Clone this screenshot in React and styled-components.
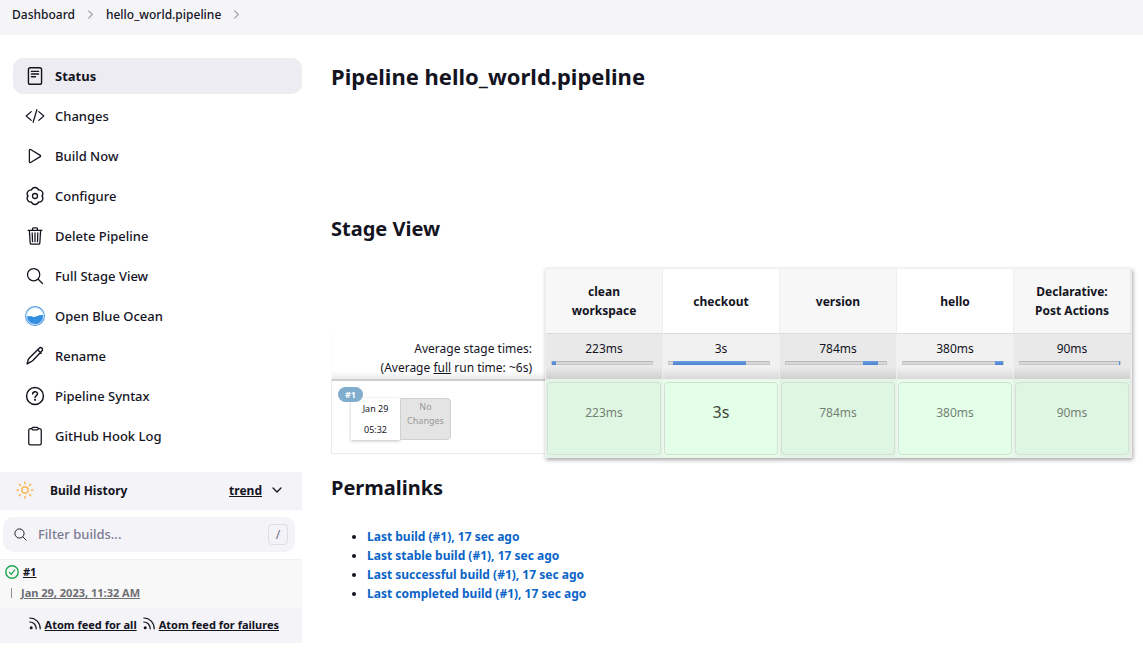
import React from "react";
import styled, { createGlobalStyle, css } from "styled-components";
import {
  IoCodeSlashOutline,
  IoPlayOutline,
  IoTrashOutline,
  IoSearchOutline,
  IoClipboardOutline,
  IoChevronDown,
  IoChevronForward,
  IoSunnyOutline,
} from "react-icons/io5";

const GlobalStyle = createGlobalStyle`
  *, *::before, *::after { box-sizing: border-box; }
  body {
    margin: 0;
    background: #fff;
    color: #14141f;
    font: 400 12px/19px "Noto Sans", "Open Sans", sans-serif;
  }
  a { color: inherit; }
  svg { flex: none; display: block; }
`;

/* Breadcrumbs */

const Breadcrumbs = styled.nav`
  display: flex;
  align-items: center;
  gap: 9px;
  height: 35px;
  padding: 0 12px 6px;
  background: #f5f5f8;
  font-weight: 500;
  svg { color: #a3a3b5; }
`;

const Crumb = styled.a`
  text-decoration: none;
`;

/* Page frame */

const Page = styled.div`
  display: flex;
  align-items: flex-start;
`;

const Sidebar = styled.aside`
  flex: none;
  width: 302px;
  padding-top: 23px;
`;

const Main = styled.main`
  flex: 1;
  min-width: 0;
  padding: 23px 11px 24px 29px;
`;

/* Side menu */

const Menu = styled.nav`
  display: flex;
  flex-direction: column;
  gap: 4px;
  padding: 0 0 18px 13px;
`;

const MenuItem = styled.a`
  display: flex;
  align-items: center;
  gap: 10px;
  height: 36px;
  padding: 0 12px;
  border-radius: 10px;
  font-size: 13px;
  font-weight: ${(p) => (p.$active ? 700 : 500)};
  background: ${(p) => (p.$active ? "#ececf2" : "transparent")};
  text-decoration: none;
`;

/* Build history */

const HistoryHeader = styled.header`
  display: flex;
  align-items: center;
  height: 38px;
  padding: 0 18px 2px 15px;
  background: #f3f3f8;
  font-weight: 700;
`;

const HistoryTitle = styled.span`
  flex: 1;
  padding-left: 15px;
`;

const IconButton = styled.button`
  display: flex;
  margin-left: 8px;
  padding: 0;
  border: 0;
  background: none;
  color: inherit;
`;

const Search = styled.label`
  display: flex;
  align-items: center;
  gap: 10px;
  height: 35px;
  margin: 7px 7px 7px 3px;
  padding: 0 7px 0 10px;
  border-radius: 10px;
  background: #f3f3f8;
`;

const SearchInput = styled.input`
  flex: 1;
  min-width: 0;
  padding: 0;
  border: 0;
  outline: 0;
  background: none;
  font: 500 13px/19px "Noto Sans", "Open Sans", sans-serif;
  &::placeholder { color: #7b7b92; opacity: 1; }
`;

const Shortcut = styled.kbd`
  width: 20px;
  height: 21px;
  border: 1px solid #dedee6;
  border-radius: 4px;
  color: #7b7b92;
  font: 500 12px/19px "Noto Sans", sans-serif;
  text-align: center;
`;

const Build = styled.div`
  height: 49px;
  padding: 1px 5px 0;
  border-top: 1px solid #f0f0f0;
  background: #f8f8f8;
  font-size: 11px;
  font-weight: 700;
`;

const BuildLine = styled.div`
  display: flex;
  align-items: center;
  gap: 4px;
  height: 21px;
`;

const BuildDate = styled.a`
  margin-left: 6px;
  padding-left: 10px;
  color: #6e6e73;
  position: relative;
  &::before {
    content: "";
    position: absolute;
    left: 0;
    top: 5px;
    height: 10px;
    border-left: 1px solid #8f8f94;
  }
`;

const Feeds = styled.footer`
  display: flex;
  justify-content: flex-end;
  gap: 6px;
  height: 35px;
  padding: 0 23px 2px 0;
  background: #f3f3f8;
  font-size: 11px;
  font-weight: 700;
`;

const Feed = styled.a`
  display: flex;
  align-items: center;
  gap: 4px;
  svg { margin-bottom: 2px; }
`;

/* Main column */

const Title = styled.h1`
  margin: 0 0 119px;
  font-size: 22px;
  line-height: 36px;
`;

const Subtitle = styled.h2`
  margin: 0 0 23px;
  font-size: 20px;
  line-height: 32px;
`;

const StageView = styled.section`
  display: flex;
  align-items: flex-start;
  margin-bottom: 14px;
`;

const Runs = styled.div`
  flex: none;
  width: 214px;
  padding-top: 65px;
`;

const Averages = styled.div`
  height: 48px;
  padding: 6px 13px 0 0;
  border-bottom: 2px solid #cdcdcd;
  border-left: 1px solid #fafafa;
  background: linear-gradient(#fff 38px, #ececec);
  text-align: right;
`;

const Run = styled.div`
  height: 73px;
  padding: 6px;
  border: solid #ebebeb;
  border-width: 0 0 1px 1px;
`;

const RunBadge = styled.span`
  position: relative;
  display: block;
  width: 25px;
  height: 15px;
  border-radius: 8px;
  background: #80acce;
  color: #fff;
  font-size: 9px;
  font-weight: 700;
  line-height: 15px;
  text-align: center;
`;

const RunInfo = styled.div`
  display: flex;
  width: 100px;
  height: 42px;
  margin: -4px 0 0 13px;
  font-size: 9px;
  text-align: center;
`;

const RunTime = styled.div`
  flex: 1;
  background: #fff;
  box-shadow: 0 1px 3px rgba(0, 0, 0, 0.25);
  line-height: 21px;
`;

const NoChanges = styled.div`
  flex: 1;
  padding-top: 1px;
  border: 1px solid #d0d0d0;
  border-radius: 0 4px 4px 0;
  background: #e4e4e4;
  color: #999;
  line-height: 14px;
`;

const StagePanel = styled.div`
  flex: 1;
  min-width: 0;
  border: 1px solid #efefef;
  box-shadow: 1px 2px 4px rgba(0, 0, 0, 0.35);
`;

const Stages = styled.table`
  width: 100%;
  table-layout: fixed;
  border-spacing: 0;
  text-align: center;
`;

const cell = css`
  padding: 0;
  border-right: 1px solid #efefef;
  &:last-child { border-right-color: #e6e6e6; }
`;

const StageName = styled.th`
  ${cell}
  height: 65px;
  padding: 0 16px;
  border-bottom: 1px solid #dcdcdc;
  background: #fff;
  &:nth-child(odd) { background: #f7f7f7; }
`;

const StageAverage = styled.td`
  ${cell}
  height: 45px;
  padding: 5px 9px 0 5px;
  vertical-align: top;
  background: linear-gradient(#f1f1f1 33px, #d9d9d9);
  &:nth-child(odd) { background: linear-gradient(#e9e9e9 33px, #cfcfcf); }
`;

const AverageText = styled.div`
  padding-left: 4px;
`;

const Bar = styled.div`
  display: flex;
  height: 4px;
  margin-top: 3px;
  border: 1px solid #c8c8c8;
  border-top-color: #b8b8b8;
  background: #d8d8d8;
`;

const BarFill = styled.div`
  flex: none;
  height: 4px;
  margin-top: -1px;
  background: linear-gradient(#6d9fdc, #4b80d2);
`;

const StageRun = styled.td`
  ${cell}
  height: 77px;
  padding: 2px 1px;
  border-top: 1px solid #efefef;
  background: #e4ffe7;
  &:nth-child(odd) { background: #dff7e2; }
`;

const StageBox = styled.div`
  height: 73px;
  border: 1px solid #d6ddd7;
  border-radius: 4px;
  color: ${(p) => (p.$slow ? "#3c463e" : "#758077")};
  font-size: ${(p) => (p.$slow ? 16 : 12)}px;
  line-height: 59px;
`;

const Permalinks = styled.ul`
  margin: 0;
  padding-left: 36px;
  font-weight: 700;
`;

const Permalink = styled.a`
  color: #0b64c8;
  text-decoration: none;
`;

/* Icons */

const Line = ({ size = 20, children, width = 32 }) => (
  <svg
    width={size}
    height={size}
    viewBox="0 0 512 512"
    fill="none"
    stroke="currentColor"
    strokeWidth={width}
    strokeLinecap="round"
    strokeLinejoin="round"
    aria-hidden="true"
  >
    {children}
  </svg>
);

const StatusIcon = () => (
  <Line width={36}>
    <rect x="88" y="44" width="336" height="424" rx="48" />
    <path d="M166 138h180M166 206h180M166 274h100" />
  </Line>
);

const GearIcon = () => (
  <Line width={34}>
    <circle cx="256" cy="256" r="64" />
    <path d="M434 256C486 306 446 424 345 410C317 494 195 494 167 410C66 424 26 306 78 256C26 206 66 88 167 102C195 18 317 18 345 102C446 88 486 206 434 256z" />
  </Line>
);

const PencilIcon = () => (
  <Line width={36}>
    <path d="M54 458l26-98c8-26 18-42 38-62L358 66c26-26 60-28 78-10s16 52-10 78L206 364c-20 20-36 32-60 42zM326 98l88 88" />
  </Line>
);

const HelpIcon = () => (
  <Line width={38}>
    <circle cx="256" cy="256" r="216" />
    <path d="M196 202c6-72 124-72 124-4 0 48-62 46-62 98" />
    <circle cx="258" cy="354" r="10" fill="currentColor" />
  </Line>
);

const OceanIcon = () => (
  <svg width="20" height="20" viewBox="0 0 20 20" aria-hidden="true">
    <circle cx="10" cy="10" r="9.4" fill="#fff" stroke="#4a97e0" strokeWidth="1.1" />
    <circle cx="10" cy="10" r="8.4" fill="none" stroke="#b5d7f5" strokeWidth=".9" />
    <path d="M2 10.6c2.6-1.2 4.4-.2 6.4.3 2.7.7 4.6-2.4 9.6-1.7.3 5.6-3.6 8.8-8 8.8s-7.7-3-8-7.4z" fill="#348fe2" />
  </svg>
);

const CheckIcon = () => (
  <svg width="14" height="14" viewBox="0 0 14 14" fill="none" stroke="#1ea64b" aria-hidden="true">
    <circle cx="7" cy="7" r="6.2" strokeWidth="1.4" />
    <path d="M4.4 7.4l1.8 1.9 3.6-4.4" strokeWidth="1.2" strokeLinecap="round" />
  </svg>
);

const FeedIcon = () => (
  <svg width="12" height="13" viewBox="0 0 12 13" fill="none" stroke="currentColor" strokeLinecap="round" aria-hidden="true">
    <path d="M.8 1c6 0 10.4 4.8 10.4 10.8M.8 5c3.8 0 6.4 3 6.4 6.8" strokeWidth="1.2" />
    <circle cx="2.2" cy="10.8" r="1.5" fill="currentColor" stroke="none" />
  </svg>
);

const menu = [
  ["Status", <StatusIcon />],
  ["Changes", <IoCodeSlashOutline size={20} />],
  ["Build Now", <IoPlayOutline size={20} />],
  ["Configure", <GearIcon />],
  ["Delete Pipeline", <IoTrashOutline size={20} />],
  ["Full Stage View", <IoSearchOutline size={20} />],
  ["Open Blue Ocean", <OceanIcon />],
  ["Rename", <PencilIcon />],
  ["Pipeline Syntax", <HelpIcon />],
  ["GitHub Hook Log", <IoClipboardOutline size={20} />],
];

/* start and share are percentages of the full run */
const stages = [
  { name: "clean workspace", time: "223ms", start: 0, share: 4 },
  { name: "checkout", time: "3s", start: 4, share: 73, slow: true },
  { name: "version", time: "784ms", start: 77, share: 15 },
  { name: "hello", time: "380ms", start: 92, share: 8 },
  { name: "Declarative: Post Actions", time: "90ms", start: 99, share: 1 },
];

const permalinks = ["Last build", "Last stable build", "Last successful build", "Last completed build"];

export default function App() {
  return (
    <>
      <GlobalStyle />
      <Breadcrumbs aria-label="Breadcrumb">
        <Crumb href="#">Dashboard</Crumb>
        <IoChevronForward size={13} />
        <Crumb href="#">hello_world.pipeline</Crumb>
        <IoChevronForward size={13} />
      </Breadcrumbs>
      <Page>
        <Sidebar>
          <Menu>
            {menu.map(([label, icon], i) => (
              <MenuItem href="#" key={label} $active={i === 0}>
                {icon}
                {label}
              </MenuItem>
            ))}
          </Menu>
          <HistoryHeader>
            <IoSunnyOutline size={20} color="#fbac35" />
            <HistoryTitle>Build History</HistoryTitle>
            <a href="#">trend</a>
            <IconButton aria-label="Collapse build history">
              <IoChevronDown size={14} />
            </IconButton>
          </HistoryHeader>
          <Search>
            <IoSearchOutline size={15} />
            <SearchInput type="text" placeholder="Filter builds..." aria-label="Filter builds" />
            <Shortcut>/</Shortcut>
          </Search>
          <Build>
            <BuildLine>
              <CheckIcon />
              <a href="#">#1</a>
            </BuildLine>
            <BuildLine>
              <BuildDate href="#">Jan 29, 2023, 11:32 AM</BuildDate>
            </BuildLine>
          </Build>
          <Feeds>
            <Feed href="#"><FeedIcon />Atom feed for all</Feed>
            <Feed href="#"><FeedIcon />Atom feed for failures</Feed>
          </Feeds>
        </Sidebar>
        <Main>
          <Title>Pipeline hello_world.pipeline</Title>
          <Subtitle>Stage View</Subtitle>
          <StageView>
            <Runs>
              <Averages>
                Average stage times:
                <br />
                (Average <u>full</u> run time: ~6s)
              </Averages>
              <Run>
                <RunBadge>#1</RunBadge>
                <RunInfo>
                  <RunTime>
                    Jan 29
                    <br />
                    05:32
                  </RunTime>
                  <NoChanges>
                    No
                    <br />
                    Changes
                  </NoChanges>
                </RunInfo>
              </Run>
            </Runs>
            <StagePanel>
              <Stages>
                <thead>
                  <tr>
                    {stages.map((s) => (
                      <StageName scope="col" key={s.name}>{s.name}</StageName>
                    ))}
                  </tr>
                </thead>
                <tbody>
                  <tr>
                    {stages.map((s) => (
                      <StageAverage key={s.name}>
                        <AverageText>{s.time}</AverageText>
                        <Bar>
                          <BarFill style={{ marginLeft: `${s.start}%`, width: `${s.share}%` }} />
                        </Bar>
                      </StageAverage>
                    ))}
                  </tr>
                  <tr>
                    {stages.map((s) => (
                      <StageRun key={s.name}>
                        <StageBox $slow={s.slow}>{s.time}</StageBox>
                      </StageRun>
                    ))}
                  </tr>
                </tbody>
              </Stages>
            </StagePanel>
          </StageView>
          <Subtitle>Permalinks</Subtitle>
          <Permalinks>
            {permalinks.map((p) => (
              <li key={p}>
                <Permalink href="#">{p} (#1), 17 sec ago</Permalink>
              </li>
            ))}
          </Permalinks>
        </Main>
      </Page>
    </>
  );
}
